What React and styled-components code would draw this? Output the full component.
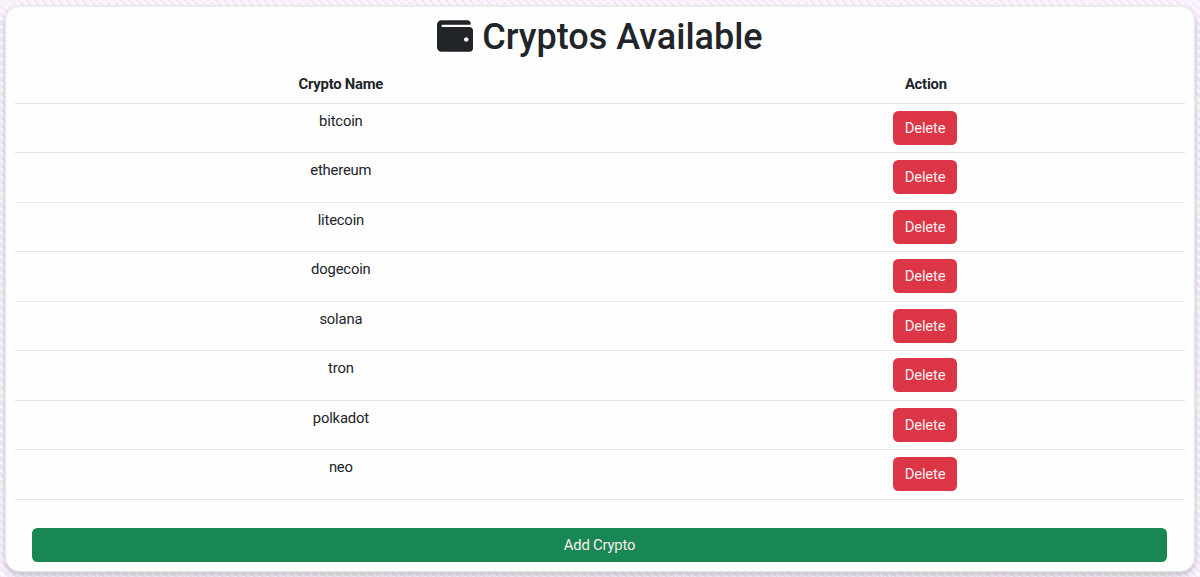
import React from "react";
import styled, { createGlobalStyle } from "styled-components";
import { FaWallet } from "react-icons/fa";

const GlobalStyle = createGlobalStyle`
  *, *::before, *::after { box-sizing: border-box; }
  body {
    margin: 0;
    overflow: hidden;
    background-color: #f8f1fb;
    color: #212529;
    font-family: Roboto, "Liberation Sans", sans-serif;
    font-size: 14.8px;
    letter-spacing: -0.18px;
    line-height: 22px;
  }
`;

const Page = styled.main`
  height: 577px;
  padding: 7px 6px 0;
  background-color: #fcf8fd;
  background-image:
    repeating-linear-gradient(45deg, #f6e8fa 0 2px, transparent 2px 5.6px),
    repeating-linear-gradient(-45deg, #f8effb 0 1.5px, transparent 1.5px 5.6px);
`;

const Card = styled.section`
  height: 564px;
  padding: 9px 9px 0;
  background: #fefefe;
  border-radius: 14px;
  box-shadow: 0 0 2px 1px #e6efeb, 0 3px 6px 1px rgba(0, 0, 0, 0.24);
`;

const Title = styled.h1`
  display: flex;
  justify-content: center;
  align-items: center;
  gap: 9px;
  height: 43px;
  margin: 0 0 6px;
  font-size: 36px;
  font-weight: 500;
  letter-spacing: 0;
  line-height: 43px;
`;

const WalletIcon = styled(FaWallet)`
  width: 36px;
  height: 36px;
  margin-top: -3px;
`;

const Table = styled.table`
  width: 100%;
  border-collapse: collapse;
  text-align: center;
  table-layout: fixed;
`;

const Cell = styled.td`
  height: 49.5px;
  padding: 7.2px;
  vertical-align: top;
  border-bottom: 1px solid #e2e4e7;
`;

const NameCell = styled(Cell)`
  padding-top: 6.2px;
`;

const HeadCell = styled.th`
  width: ${({ $width }) => $width};
  height: 38px;
  padding: 7.2px;
  font-weight: 700;
  letter-spacing: -0.22px;
  border-bottom: 1px solid #e2e4e7;
`;

const Button = styled.button`
  width: 64px;
  height: 34px;
  padding: 0;
  border: 0;
  border-radius: 5.4px;
  background: #dc3545;
  color: #f9eef0;
  font: inherit;
  letter-spacing: inherit;
  display: inline-block;
  vertical-align: top;
`;

const DeleteButton = styled(Button)`
  margin-right: 1.6px;
`;

const AddButton = styled(Button)`
  width: 100%;
  background: #198754;
`;

const Footer = styled.footer`
  padding: 28.6px 18px 0 17px;
`;

const coins = ["bitcoin", "ethereum", "litecoin", "dogecoin", "solana", "tron", "polkadot", "neo"];

export default function App() {
  return (
    <Page>
      <GlobalStyle />
      <Card>
        <Title><WalletIcon />Cryptos Available</Title>
        <Table>
          <thead>
            <tr>
              <HeadCell $width="55.7%">Crypto Name</HeadCell>
              <HeadCell $width="44.3%">Action</HeadCell>
            </tr>
          </thead>
          <tbody>
            {coins.map((coin) => (
              <tr key={coin}>
                <NameCell>{coin}</NameCell>
                <Cell><DeleteButton type="button">Delete</DeleteButton></Cell>
              </tr>
            ))}
          </tbody>
        </Table>
        <Footer><AddButton type="button">Add Crypto</AddButton></Footer>
      </Card>
    </Page>
  );
}
